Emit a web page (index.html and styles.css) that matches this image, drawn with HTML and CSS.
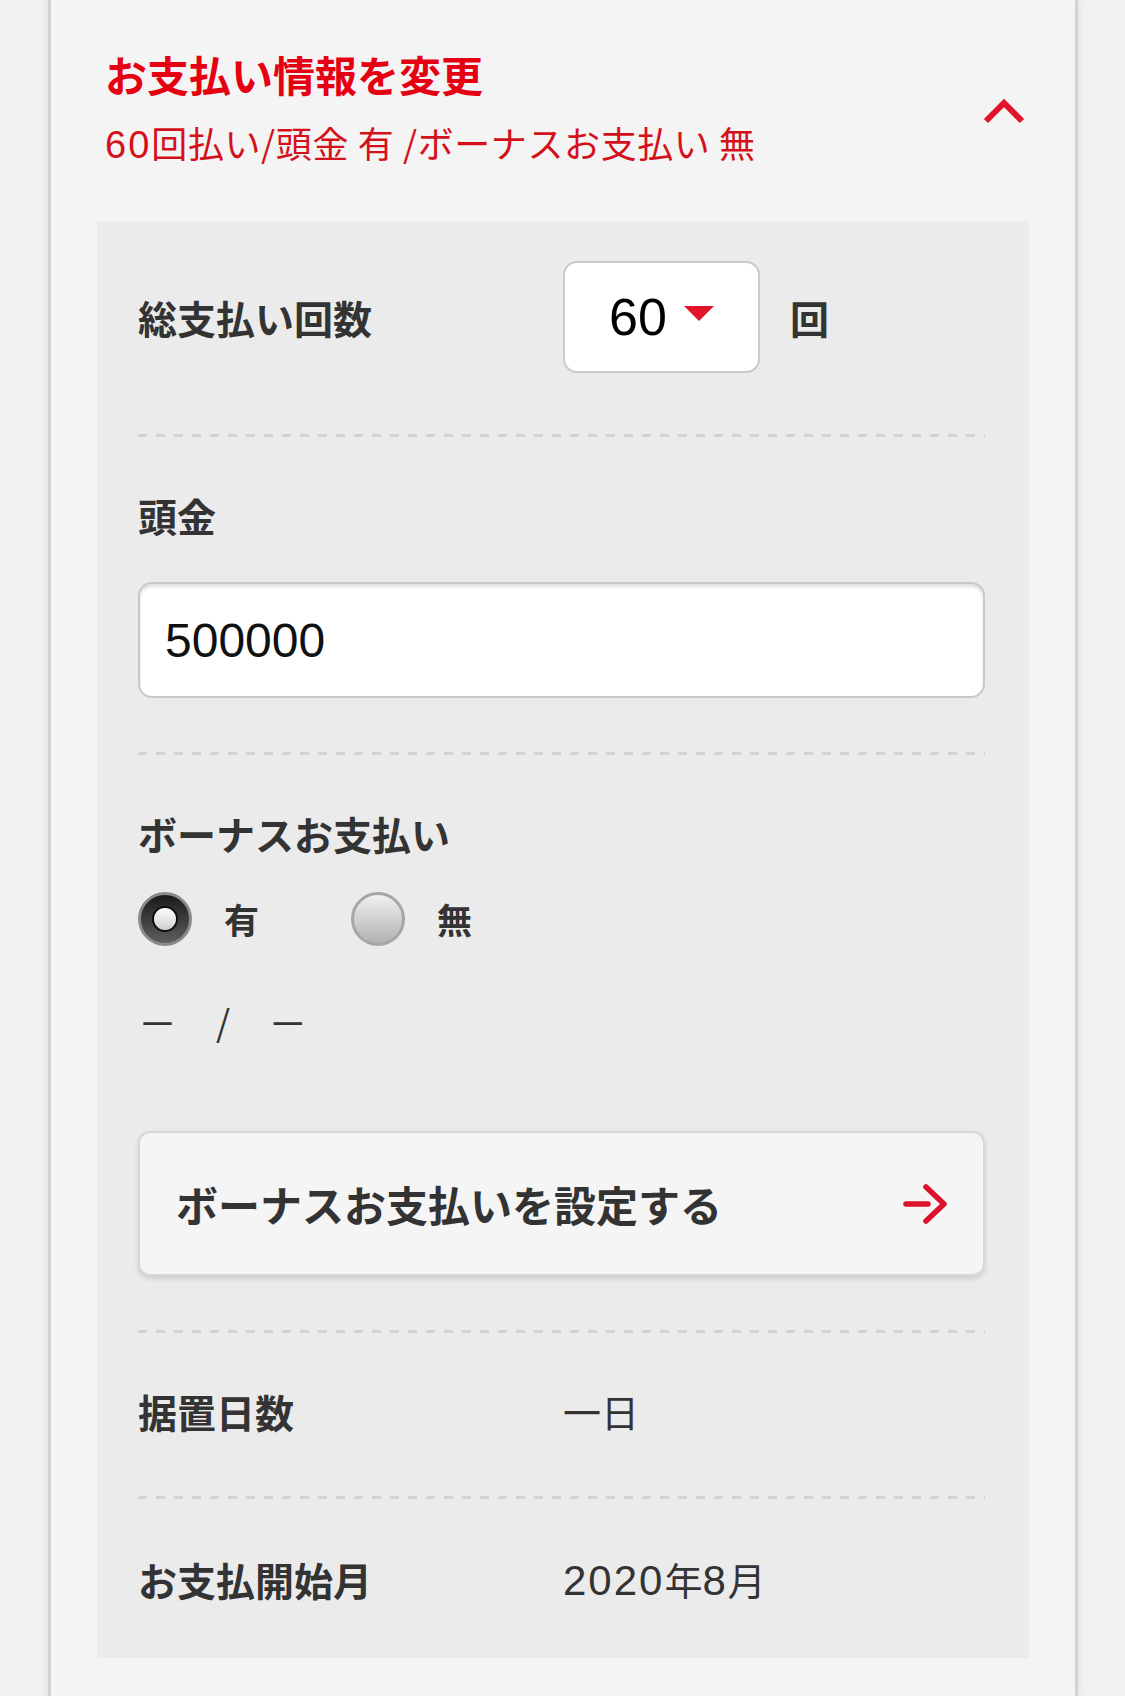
FILE: index.html
```html
<!DOCTYPE html>
<html lang="ja">
<head>
<meta charset="utf-8">
<title>お支払い情報を変更</title>
<link rel="stylesheet" href="styles.css">
</head>
<body>
<section class="card">
  <header class="acc-head">
    <div class="acc-text">
      <h2 class="acc-title">お支払い情報を変更</h2>
      <p class="acc-summary"><span class="num">60</span>回払い/頭金 有 /ボーナスお支払い 無</p>
    </div>
    <svg class="chev" viewBox="0 0 44 28" aria-hidden="true">
      <path d="M4 25 L22 7 L40 25" fill="none" stroke="#e2132b" stroke-width="6"/>
    </svg>
  </header>

  <div class="panel">
    <div class="row row-first">
      <div class="label">総支払い回数</div>
      <div class="val-group">
        <div class="select">
          <span class="select-num">60</span>
          <span class="tri"></span>
        </div>
        <span class="unit">回</span>
      </div>
    </div>
    <div class="sep"></div>

    <div class="sec">
      <div class="label">頭金</div>
      <input class="text-input" type="text" value="500000">
    </div>
    <div class="sep"></div>

    <div class="sec">
      <div class="label">ボーナスお支払い</div>
      <div class="radios">
        <div class="opt opt-first">
          <span class="radio on"><span class="dot"></span></span>
          <span class="opt-label">有</span>
        </div>
        <div class="opt">
          <span class="radio off"></span>
          <span class="opt-label">無</span>
        </div>
      </div>
      <div class="months">
        <span class="m-dash">－</span>
        <span class="m-slash">/</span>
        <span class="m-dash">－</span>
      </div>
      <div class="bonus-btn">
        <span class="btn-text">ボーナスお支払いを設定する</span>
        <svg class="arrow" viewBox="0 0 44 40" aria-hidden="true">
          <path d="M3 20 H25" fill="none" stroke="#dc132a" stroke-width="5.5" stroke-linecap="round"/>
          <path d="M23 3 L41 20 L23 37" fill="none" stroke="#dc132a" stroke-width="5.5" stroke-linecap="round" stroke-linejoin="round"/>
        </svg>
      </div>
    </div>
    <div class="sep"></div>

    <div class="row row-mid">
      <div class="label">据置日数</div>
      <div class="value">一日</div>
    </div>
    <div class="sep"></div>

    <div class="row row-last">
      <div class="label">お支払開始月</div>
      <div class="value"><span class="num-val">2020</span>年<span class="num-val">8</span>月</div>
    </div>
  </div>
</section>
</body>
</html>
```

FILE: styles.css
```css
* {
  box-sizing: border-box;
}

html,
body {
  margin: 0;
  padding: 0;
}

body {
  background: #f2f2f2;
  font-family: "Noto Sans CJK JP", "Noto Sans", sans-serif;
  color: #333;
  overflow: hidden;
}

.card {
  margin-left: 48px;
  width: 1030px;
  background: #f4f4f4;
  border-left: 3px solid #d3d3d3;
  border-right: 3px solid #d3d3d3;
  box-shadow: 0 0 8px rgba(0, 0, 0, 0.10);
  padding: 51px 46px 38px;
}

.acc-head {
  display: flex;
  align-items: center;
  justify-content: space-between;
  padding: 0 3px 0 8px;
}

.acc-title {
  margin: 0;
  font-size: 42px;
  line-height: 46px;
  font-weight: 700;
  color: #e50012;
}

.acc-summary {
  margin: 25px 0 0;
  height: 40px;
  font-size: 36px;
  line-height: 40px;
  font-weight: 400;
  letter-spacing: 0.6px;
  color: #d4111b;
}

.acc-summary .num {
  font-family: "Liberation Sans", Arial, sans-serif;
  font-size: 38px;
  line-height: 1;
  letter-spacing: 2px;
}

.chev {
  display: block;
  width: 44px;
  height: 28px;
  margin-top: 6px;
}

.panel {
  margin-top: 59px;
  background: #ebebeb;
  padding: 40px 44px 57px 41px;
}

.sep {
  height: 3px;
  background: repeating-linear-gradient(to right, #d3d3d3 0 9px, transparent 9px 18px);
}

.label {
  font-size: 39px;
  line-height: 44px;
  font-weight: 700;
  color: #333;
}

.row {
  display: grid;
  grid-template-columns: 425px 1fr;
  align-items: center;
}

.row-first {
  padding-bottom: 61px;
}

.row-mid {
  padding: 56px 0 63px;
}

.row-last {
  padding-top: 58px;
}

.value {
  height: 44px;
  font-size: 38px;
  line-height: 44px;
  font-weight: 400;
  color: #333;
}

.num-val {
  font-family: "Liberation Sans", Arial, sans-serif;
  font-size: 42px;
  line-height: 1;
  letter-spacing: 2px;
}

.val-group {
  display: flex;
  align-items: center;
}

.select {
  display: flex;
  align-items: center;
  width: 197px;
  height: 112px;
  border: 2px solid #cacaca;
  border-radius: 14px;
  background: #fff;
  padding-left: 44px;
}

.select-num {
  font-family: "Liberation Sans", Arial, sans-serif;
  font-size: 52px;
  line-height: 1;
  color: #000;
}

.tri {
  margin-left: 17px;
  margin-top: -8px;
  width: 0;
  height: 0;
  border-left: 15px solid transparent;
  border-right: 15px solid transparent;
  border-top: 15px solid #e2132b;
}

.unit {
  margin-left: 30px;
  font-size: 39px;
  line-height: 50px;
  font-weight: 700;
  color: #333;
}

.sec {
  padding: 56px 0 54px;
}

.text-input {
  display: block;
  width: 100%;
  height: 116px;
  margin: 45px 0 0;
  border: 2px solid #c8c8c8;
  border-radius: 14px;
  background: #fff;
  box-shadow: inset 0 3px 3px rgba(0, 0, 0, 0.12);
  padding: 0 0 0 25px;
  font-family: "Liberation Sans", Arial, sans-serif;
  font-size: 48px;
  color: #111;
  outline: none;
}

.radios {
  display: flex;
  align-items: center;
  margin-top: 37px;
}

.opt {
  display: flex;
  align-items: center;
  gap: 32px;
}

.opt-first {
  margin-right: 92px;
}

.radio {
  display: flex;
  align-items: center;
  justify-content: center;
  width: 54px;
  height: 54px;
  border-radius: 50%;
}

.radio.on {
  border: 3px solid #8a8a8a;
  background: linear-gradient(to bottom, #1a1a1a, #5e5e5e);
}

.radio.off {
  border: 3px solid #a6a6a6;
  background: linear-gradient(to bottom, #f0f0f0, #b2b2b2);
}

.dot {
  width: 22px;
  height: 22px;
  border-radius: 50%;
  background: linear-gradient(to bottom, #ffffff, #cfcfcf);
  box-shadow: 0 0 0 2px #0e0e0e;
}

.opt-label {
  font-size: 35px;
  line-height: 50px;
  font-weight: 700;
  color: #333;
}

.months {
  display: flex;
  align-items: center;
  margin-top: 53px;
  height: 44px;
  font-size: 39px;
  line-height: 44px;
  color: #333;
}

.m-slash {
  font-size: 36px;
  margin: 0 38px 0 39px;
}

.bonus-btn {
  display: flex;
  align-items: center;
  justify-content: space-between;
  height: 145px;
  margin-top: 88px;
  border: 2px solid #d7d7d7;
  border-radius: 12px;
  background: #f5f5f5;
  box-shadow: 0 3px 5px rgba(0, 0, 0, 0.12);
  padding: 0 36px 0 36px;
}

.btn-text {
  font-size: 42px;
  line-height: 50px;
  font-weight: 700;
  color: #333;
}

.arrow {
  display: block;
  width: 44px;
  height: 40px;
}
```
